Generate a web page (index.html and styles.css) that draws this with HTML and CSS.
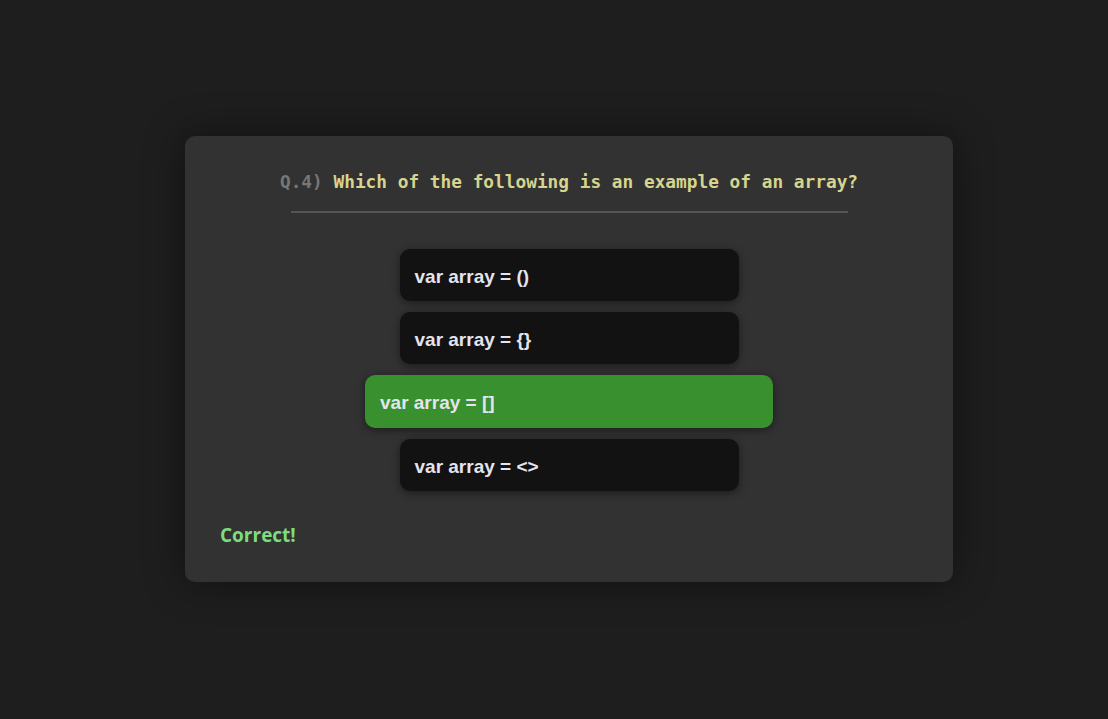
FILE: index.html
```html
<!DOCTYPE html>
<html>
<head>
<meta charset="utf-8">
<link rel="stylesheet" href="styles.css">
</head>
<body>
<div class="page">
  <div class="card">
    <h2 class="question"><span class="qnum">Q.4)</span> Which of the following is an example of an array?</h2>
    <div class="rule"></div>
    <div class="options">
      <div class="option">var array = ()</div>
      <div class="option">var array = {}</div>
      <div class="option correct">var array = []</div>
      <div class="option">var array = &lt;&gt;</div>
    </div>
    <div class="result">Correct!</div>
  </div>
</div>
</body>
</html>
```
FILE: styles.css
```css
html, body {
  margin: 0;
  padding: 0;
  background: #1e1e1e;
}
.page {
  width: 1108px;
  height: 719px;
  display: flex;
  justify-content: center;
  padding-top: 136px;
  padding-left: 30px;
  box-sizing: border-box;
}
.card {
  width: 768px;
  height: 446px;
  flex-shrink: 0;
  box-sizing: border-box;
  background: #323232;
  border-radius: 10px;
  box-shadow: 0 0 40px rgba(0,0,0,0.45);
  padding: 30px 35px 0;
  display: flex;
  flex-direction: column;
  align-items: center;
}
.question {
  margin: 0;
  font-family: "DejaVu Sans Mono", "Liberation Mono", monospace;
  font-weight: bold;
  font-size: 17.8px;
  line-height: 32px;
  color: #d6d48e;
  white-space: nowrap;
}
.qnum {
  color: #777;
}
.rule {
  width: 557px;
  height: 2px;
  background: #555;
  margin-top: 13px;
}
.options {
  margin-top: 36px;
  display: flex;
  flex-direction: column;
  align-items: center;
  gap: 11px;
}
.option {
  width: 339px;
  height: 52px;
  box-sizing: border-box;
  padding: 3px 15px 0;
  background: #121212;
  border-radius: 10px;
  box-shadow: 0 2px 8px rgba(0,0,0,0.45);
  display: flex;
  align-items: center;
  font-family: "Liberation Sans", Arial, sans-serif;
  font-weight: bold;
  font-size: 19px;
  color: #e4e4ee;
}
.option.correct {
  width: 408px;
  height: 53px;
  background: #38902e;
}
.result {
  align-self: flex-start;
  margin-top: 31px;
  font-family: "Open Sans", "Noto Sans", sans-serif;
  font-weight: bold;
  font-size: 19px;
  color: #7ddc7d;
}
```
